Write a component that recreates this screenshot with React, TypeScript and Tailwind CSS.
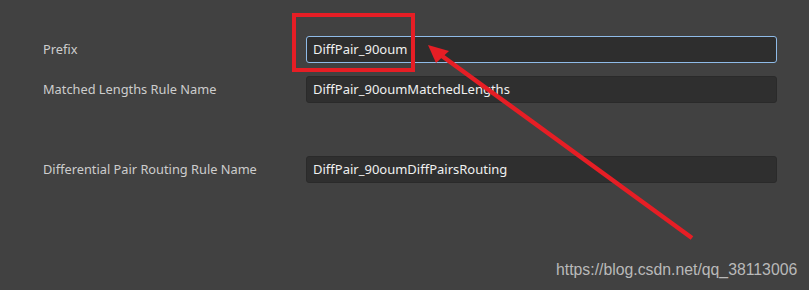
import React from "react";

const font = { fontFamily: '"Noto Sans", "Open Sans", sans-serif' };

function Row({ label, value, active, className }: { label: string; value: string; active?: boolean; className?: string }) {
  return (
    <div className={"flex items-center " + (className ?? "")}>
      <div className="w-[263px] text-[12.8px] leading-none text-[#cdcdcd]">{label}</div>
      <div
        className={
          "flex h-[27px] w-[471px] items-center rounded-[3px] pl-[6px] text-[13px] text-[#f0f0f0] " +
          (active ? "border border-[#8fbbe8] bg-[#2e2e2e]" : "border border-[#2a2a2a] bg-[#2f2f2f]")
        }
      >
        {value}
      </div>
    </div>
  );
}

export default function App() {
  return (
    <div className="relative h-[290px] w-[809px] overflow-hidden bg-[#414141]" style={font}>
      <div className="flex flex-col pl-[43px] pt-[36px]">
        <Row label="Prefix" value="DiffPair_90oum" active />
        <Row label="Matched Lengths Rule Name" value="DiffPair_90oumMatchedLengths" className="mt-[13px]" />
        <Row label="Differential Pair Routing Rule Name" value="DiffPair_90oumDiffPairsRouting" className="mt-[53px]" />
      </div>
      <svg className="pointer-events-none absolute left-0 top-0" width="809" height="290">
        <rect x="294" y="15" width="119" height="55" fill="none" stroke="#e61e25" strokeWidth="4" />
        <line x1="442" y1="56" x2="692" y2="238" stroke="#e61e25" strokeWidth="4.5" />
        <polygon points="428,45 449,51 436,63" fill="#e61e25" />
      </svg>
      <div
        className="absolute left-[556px] top-[260px] text-[15.8px] leading-[20px] text-[#b9b9b9]"
        style={{ fontFamily: '"Liberation Sans", Arial, sans-serif' }}
      >
        https://blog.csdn.net/qq_38113006
      </div>
    </div>
  );
}
